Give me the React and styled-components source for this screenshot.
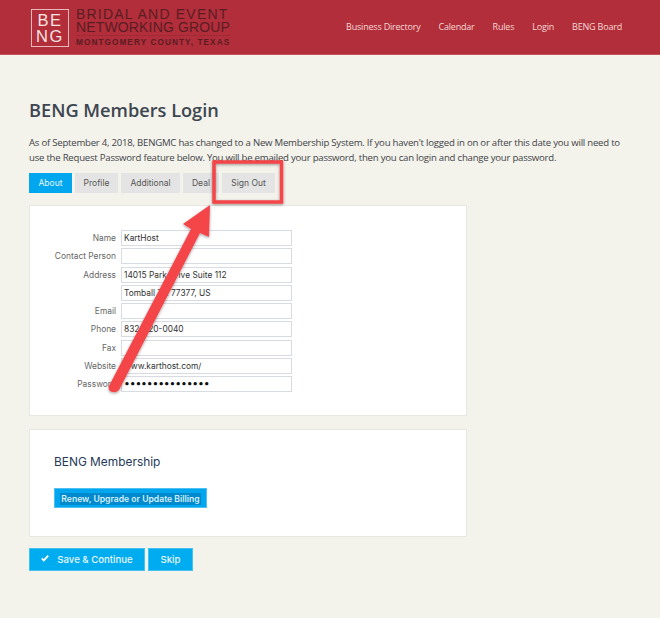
import React from "react";
import styled, { createGlobalStyle } from "styled-components";

const Global = createGlobalStyle`
  html, body { margin: 0; padding: 0; background: #f3f2eb; }
  body { font-family: "Open Sans", sans-serif; width: 660px; height: 618px; overflow: hidden; }
  * { box-sizing: border-box; }
`;
const Page = styled.div`position: relative; width: 660px; height: 618px; overflow: hidden;`;
const Header = styled.header`
  height: 55px; background: #b12e3a; border-bottom: 1px solid #c4525b;
  display: flex; align-items: center; justify-content: space-between;
  padding: 0 38px 0 31px;
`;
const Brand = styled.div`display: flex; align-items: center; gap: 7px; padding-top: 1px;`;
const LogoBox = styled.div`
  width: 38px; height: 38px; border: 1px solid #e8b9bb; color: #f7e4e2;
  font-family: "Liberation Sans", sans-serif; font-size: 16.5px; line-height: 16px;
  letter-spacing: 1.6px; display: flex; flex-direction: column; align-items: center; justify-content: center;
`;
const BrandText = styled.div`
  color: #5a1d24; font-family: "Liberation Sans", sans-serif; display: flex; flex-direction: column;
`;
const BrandLine = styled.span`font-size: 14px; line-height: 13px; white-space: nowrap; letter-spacing: ${p => p.$ls}px;`;
const BrandSub = styled.span`
  font-size: 8.2px; line-height: 10px; margin-top: 1px; padding-top: 2px; letter-spacing: 1.1px; white-space: nowrap;
  font-weight: 700; border-top: 1px solid #a02a35;
`;
const Nav = styled.nav`display: flex; gap: 18px; color: #f5d9d6; font-size: 9px; letter-spacing: -0.2px; padding-bottom: 1px;`;
const Main = styled.main`padding: 43px 0 0 29px;`;
const Title = styled.h1`margin: 0; color: #3d4650; font-size: 18.2px; line-height: 25px; font-weight: 600;`;
const Intro = styled.p`margin: 12px 0 0; width: 600px; color: #3f4448; font-size: 9.6px; letter-spacing: -0.23px; line-height: 15px;`;
const Tabs = styled.div`display: flex; gap: 3px; margin-top: 8px; height: 20px;`;
const Tab = styled.div`
  width: ${p => p.$w}px; height: 20px; line-height: 20px; text-align: center; font-family: "Inter", sans-serif; font-size: 8.5px;
  background: ${p => (p.$active ? "#00a7ee" : "#e4e4e4")}; color: ${p => (p.$active ? "#e6f6fd" : "#555")};
`;
const Card = styled.section`
  width: 438px; height: ${p => p.$h}px; margin-top: ${p => p.$top}px; background: #fff; border: 1px solid #e8e8e2;
  padding: ${p => p.$pad};
`;
const Row = styled.div`display: flex; align-items: center; height: 16px; margin-bottom: 2.25px;`;
const Label = styled.label`
  width: 62px; margin-right: 5px; text-align: right; font-family: "Inter", sans-serif; font-size: 8.4px; color: #666; white-space: nowrap;
`;
const Value = styled.div`
  width: 171px; height: 16px; border: 1px solid #d8dce2; padding-left: 2px; background: #fff;
  font-family: "Inter", sans-serif; font-size: ${p => (p.$dots ? "10.4px" : "8.4px")}; line-height: 14px; color: ${p => (p.$dots ? "#111" : "#333")}; white-space: nowrap; overflow: hidden;
  letter-spacing: ${p => (p.$dots ? "-0.15px" : "0")};
`;
const CardHeading = styled.h2`margin: 0; color: #263a58; font-family: "Inter", sans-serif; font-size: 11.9px; font-weight: 400; line-height: 14px;`;
const BillingButton = styled.div`
  margin-top: 19px; width: 153px; height: 20px; background: #00a7ee; padding: 4px 5px; border: 1px solid #4fc0f1;
`;
const Selected = styled.span`
  display: block; height: 12px; width: 141px; background: #0089cc; color: #d8f0fb; font-family: "Inter", sans-serif; font-size: 8.6px; line-height: 12px; font-weight: 600; white-space: nowrap; text-align: center;
`;
const Actions = styled.div`display: flex; gap: 3px; margin-top: 11px;`;
const ActionButton = styled.div`
  height: 23px; width: ${p => p.$w}px; background: #00acf0; color: #e8f7fe; border: 1px solid #44c0f2;
  display: flex; align-items: center; justify-content: center; gap: 8px;
  font-family: "Inter", sans-serif; font-size: 9.6px; font-weight: 500;
`;
const Check = styled.svg`margin-top: -4px;`;
const Overlay = styled.svg`position: absolute; left: 0; top: 0; pointer-events: none;`;

const rows = [
  ["Name", "KartHost"], ["Contact Person", ""], ["Address", "14015 Park Drive Suite 112"],
  ["", "Tomball TX 77377, US"], ["Email", ""], ["Phone", "832-220-0040"], ["Fax", ""],
  ["Website", "www.karthost.com/"], ["Password", "•••••••••••••••", true],
];

export default function App() {
  return (
    <Page>
      <Global />
      <Header>
        <Brand>
          <LogoBox><span>BE</span><span>NG</span></LogoBox>
          <BrandText>
            <BrandLine $ls={1.2}>BRIDAL AND EVENT</BrandLine>
            <BrandLine $ls={0.15}>NETWORKING GROUP</BrandLine>
            <BrandSub>MONTGOMERY COUNTY, TEXAS</BrandSub>
          </BrandText>
        </Brand>
        <Nav>
          <span>Business Directory</span><span>Calendar</span><span>Rules</span><span>Login</span><span>BENG Board</span>
        </Nav>
      </Header>
      <Main>
        <Title>BENG Members Login</Title>
        <Intro>As of September 4, 2018, BENGMC has changed to a New Membership System. If you haven't logged in on or after this date you will need to use the Request Password feature below. You will be emailed your password, then you can login and change your password.</Intro>
        <Tabs>
          <Tab $active $w={43}>About</Tab>
          <Tab $w={43}>Profile</Tab>
          <Tab $w={59}>Additional</Tab>
          <Tab $w={36}>Deal</Tab>
          <Tab $w={53}>Sign Out</Tab>
        </Tabs>
        <Card $h={211} $top={12} $pad="24px 0 0 24px">
          {rows.map(([l, v, d], i) => (
            <Row key={i}><Label>{l}</Label><Value $dots={d}>{v}</Value></Row>
          ))}
        </Card>
        <Card $h={108} $top={13} $pad="25px 0 0 24px">
          <CardHeading>BENG Membership</CardHeading>
          <BillingButton><Selected>Renew, Upgrade or Update Billing</Selected></BillingButton>
        </Card>
        <Actions>
          <ActionButton $w={116}>
            <Check width="8" height="8" viewBox="0 0 10 9"><path d="M1 5l2.5 2.5L9 1.5" fill="none" stroke="#fff" strokeWidth="2.4"/></Check>
            Save &amp; Continue
          </ActionButton>
          <ActionButton $w={45}>Skip</ActionButton>
        </Actions>
      </Main>
      <Overlay width="660" height="618" viewBox="0 0 660 618">
        <defs>
          <filter id="s" x="-20%" y="-20%" width="140%" height="140%">
            <feDropShadow dx="0" dy="1" stdDeviation="1.5" floodColor="#000" floodOpacity="0.4" />
          </filter>
        </defs>
        <rect x="214" y="162" width="67.5" height="40" fill="none" stroke="#f4444a" strokeWidth="3.5" filter="url(#s)" />
        <path d="M210 205 L209 237 L200 233 L119 390 Q115 394 110 391 Q108 389 109 386 L191 229 L183 224 Z" fill="#f4444a" filter="url(#s)" />
      </Overlay>
    </Page>
  );
}
